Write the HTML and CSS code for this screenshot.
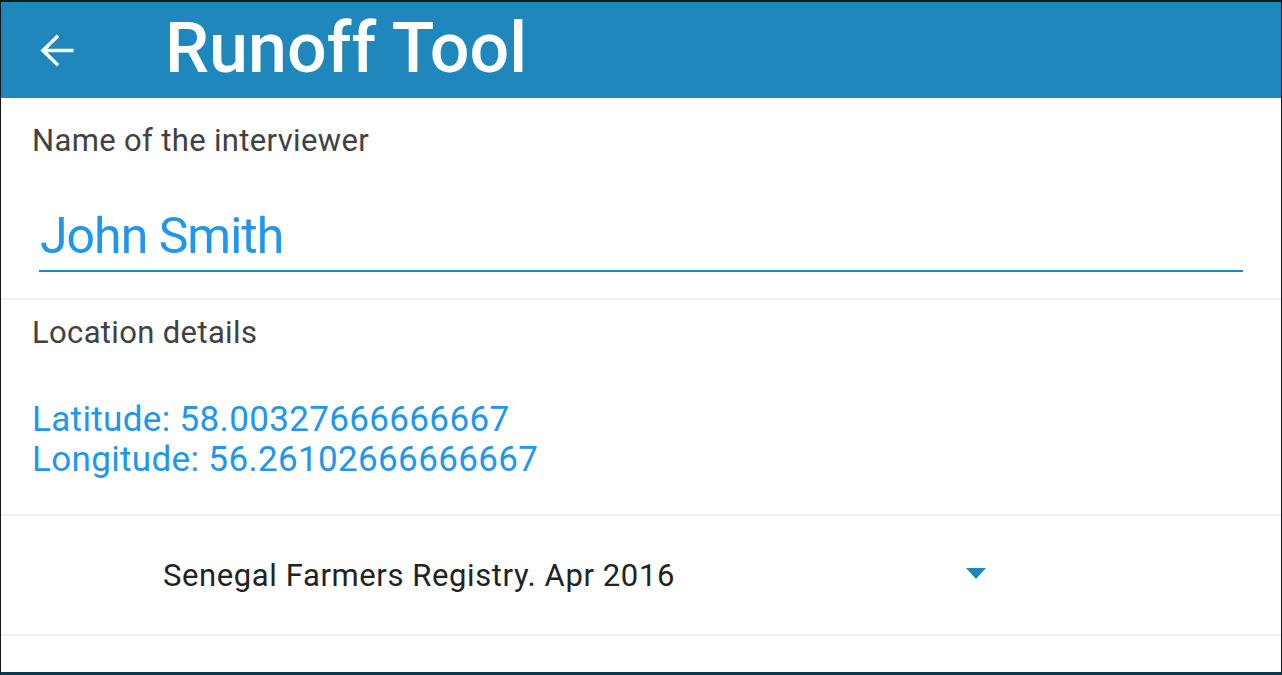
FILE: index.html
```html
<!DOCTYPE html>
<html lang="en">
<head>
<meta charset="utf-8">
<title>Runoff Tool</title>
<link rel="stylesheet" href="styles.css">
</head>
<body>
<div class="screen">
  <header class="appbar">
    <svg class="back" width="36" height="36" viewBox="0 0 36 36" aria-hidden="true">
      <path d="M3 17.5 H33.5 M18 2.8 L3 17.5 L18 32.2" fill="none" stroke="#ffffff" stroke-width="3.6" stroke-linecap="butt" stroke-linejoin="miter"/>
    </svg>
    <h1 class="title">Runoff Tool</h1>
  </header>
  <main class="content">
    <section class="card card-name">
      <div class="label">Name of the interviewer</div>
      <div class="field">
        <span class="field-value">John Smith</span>
      </div>
    </section>
    <section class="card card-location">
      <div class="label">Location details</div>
      <div class="coords">
        <div>Latitude: 58.00327666666667</div>
        <div>Longitude: 56.26102666666667</div>
      </div>
    </section>
    <section class="card card-select">
      <div class="select">
        <span class="select-text">Senegal Farmers Registry. Apr 2016</span>
        <span class="caret"></span>
      </div>
    </section>
    <div class="rest"></div>
  </main>
</div>
</body>
</html>
```

FILE: styles.css
```css
* { box-sizing: border-box; }
html, body {
  margin: 0;
  padding: 0;
  background: #0c2f3c;
}
body {
  width: 1282px;
  height: 675px;
  overflow: hidden;
  font-family: Roboto, "Noto Sans", sans-serif;
}
.screen {
  width: 1282px;
  height: 675px;
  border-top: 2px solid #121619;
  border-left: 1px solid #121619;
  border-right: 1px solid #121619;
  border-bottom: 3px solid #0c3a4a;
  display: flex;
  flex-direction: column;
  background: #ffffff;
}
.appbar {
  height: 96px;
  flex: 0 0 96px;
  background: #1f87bb;
  display: flex;
  align-items: center;
  padding-left: 39px;
}
.back {
  display: block;
  margin-top: 1px;
}
.title {
  margin: -4px 0 0 89px;
  color: #ffffff;
  font-weight: 500;
  font-size: 70px;
  line-height: 80px;
  letter-spacing: 0;
}
.content {
  flex: 1;
  display: flex;
  flex-direction: column;
}
.card {
  border-bottom: 2px solid #f1f1f1;
}
.label {
  color: #414141;
  font-size: 31px;
  line-height: 36px;
  letter-spacing: 0.35px;
  padding-left: 31px;
}
.card-name {
  height: 202px;
  padding-top: 25px;
}
.field {
  margin: 49px 38px 0 38px;
  border-bottom: 2px solid #1f87bb;
  height: 64px;
  padding-left: 1px;
}
.field-value {
  color: #2196ed;
  font-size: 50px;
  line-height: 56px;
  letter-spacing: -1px;
}
.card-location {
  height: 216px;
  padding-top: 15px;
}
.coords {
  margin-top: 49px;
  padding-left: 31px;
  color: #2196ed;
  font-size: 35px;
  line-height: 40px;
  letter-spacing: 0.35px;
}
.card-select {
  height: 120px;
  display: flex;
  align-items: center;
}
.select {
  display: flex;
  align-items: center;
  padding-left: 162px;
  width: 100%;
  margin-top: 2px;
}
.select-text {
  color: #222222;
  font-size: 31px;
  line-height: 36px;
  letter-spacing: 0.6px;
  width: 803px;
}
.caret {
  width: 0;
  height: 0;
  border-left: 10px solid transparent;
  border-right: 10px solid transparent;
  border-top: 11px solid #1f87bb;
  margin-top: -6px;
}
.rest {
  flex: 1;
}
```
